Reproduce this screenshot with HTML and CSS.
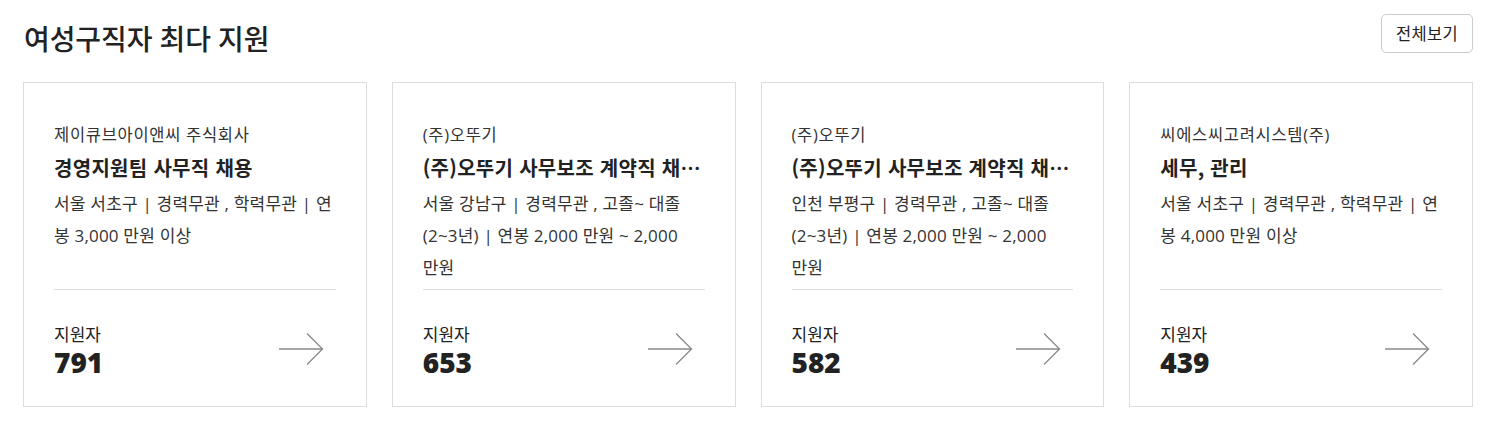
FILE: index.html
```html
<!DOCTYPE html>
<html lang="ko">
<head>
<meta charset="utf-8">
<link rel="stylesheet" href="styles.css">
</head>
<body>
<section class="wrap">
  <header class="head">
    <h2 class="head-title">여성구직자 최다 지원</h2>
    <a class="more-btn" href="#">전체보기</a>
  </header>
  <div class="cards">
    <article class="card">
      <div class="info">
        <p class="company">제이큐브아이앤씨 주식회사</p>
        <h3 class="job">경영지원팀 사무직 채용</h3>
        <p class="desc">서울 서초구 | 경력무관 , 학력무관 | 연봉 3,000 만원 이상</p>
      </div>
      <div class="foot">
        <div class="count"><span class="label">지원자</span><strong class="num">791</strong></div>
        <svg class="arrow" width="46" height="32" viewBox="0 0 46 32"><path d="M1 16H45M29 0.5L44.5 16L29 31.5" fill="none" stroke="#8a8a8a" stroke-width="1.3"/></svg>
      </div>
    </article>
    <article class="card">
      <div class="info">
        <p class="company">(주)오뚜기</p>
        <h3 class="job">(주)오뚜기 사무보조 계약직 채용 공고</h3>
        <p class="desc">서울 강남구 | 경력무관 , 고졸~ 대졸 (2~3년) | 연봉 2,000 만원 ~ 2,000 <span class="nw">만원</span></p>
      </div>
      <div class="foot">
        <div class="count"><span class="label">지원자</span><strong class="num">653</strong></div>
        <svg class="arrow" width="46" height="32" viewBox="0 0 46 32"><path d="M1 16H45M29 0.5L44.5 16L29 31.5" fill="none" stroke="#8a8a8a" stroke-width="1.3"/></svg>
      </div>
    </article>
    <article class="card">
      <div class="info">
        <p class="company">(주)오뚜기</p>
        <h3 class="job">(주)오뚜기 사무보조 계약직 채용 공고</h3>
        <p class="desc">인천 부평구 | 경력무관 , 고졸~ 대졸 (2~3년) | 연봉 2,000 만원 ~ 2,000 <span class="nw">만원</span></p>
      </div>
      <div class="foot">
        <div class="count"><span class="label">지원자</span><strong class="num">582</strong></div>
        <svg class="arrow" width="46" height="32" viewBox="0 0 46 32"><path d="M1 16H45M29 0.5L44.5 16L29 31.5" fill="none" stroke="#8a8a8a" stroke-width="1.3"/></svg>
      </div>
    </article>
    <article class="card">
      <div class="info">
        <p class="company">씨에스씨고려시스템(주)</p>
        <h3 class="job">세무, 관리</h3>
        <p class="desc">서울 서초구 | 경력무관 , 학력무관 | 연봉 4,000 만원 이상</p>
      </div>
      <div class="foot">
        <div class="count"><span class="label">지원자</span><strong class="num">439</strong></div>
        <svg class="arrow" width="46" height="32" viewBox="0 0 46 32"><path d="M1 16H45M29 0.5L44.5 16L29 31.5" fill="none" stroke="#8a8a8a" stroke-width="1.3"/></svg>
      </div>
    </article>
  </div>
</section>
</body>
</html>
```
FILE: styles.css
```css
* { box-sizing: border-box; }
body {
  margin: 0;
  background: #fff;
  color: #333;
  font-family: "Open Sans", "Noto Sans CJK KR", sans-serif;
}
.wrap {
  width: 1450px;
  margin-left: 23px;
}
.head {
  display: flex;
  justify-content: space-between;
  align-items: flex-start;
  height: 82px;
}
.head-title {
  margin: 20px 0 0 1px;
  font-size: 28px;
  line-height: 38px;
  font-weight: 500;
  color: #222;
  letter-spacing: -0.1px;
}
.more-btn {
  margin-top: 14px;
  height: 39px;
  padding: 0 14px;
  border: 1px solid #ccc;
  border-radius: 5px;
  font-size: 16.5px;
  letter-spacing: 0.3px;
  line-height: 37px;
  color: #222;
  text-decoration: none;
}
.cards {
  display: flex;
  gap: 25px;
}
.card {
  flex: 1;
  border: 1px solid #ddd;
  padding: 0 30px;
  min-width: 0;
}
.info {
  height: 207px;
  padding-top: 40px;
  border-bottom: 1px solid #ddd;
}
.company {
  margin: 0;
  font-size: 16.5px;
  letter-spacing: 0.7px;
  line-height: 24px;
  color: #333;
}
.job {
  margin: 9px 0 0;
  font-family: "Noto Sans CJK KR", sans-serif;
  font-size: 20px;
  letter-spacing: 0.3px;
  line-height: 24px;
  font-weight: 700;
  color: #222;
  white-space: nowrap;
  overflow: hidden;
  text-overflow: ellipsis;
}
.desc {
  margin: 8px 0 0;
  font-size: 17px;
  letter-spacing: 0.2px;
  line-height: 32px;
  color: #333;
}
.nw { white-space: nowrap; }
.foot {
  display: flex;
  justify-content: space-between;
  align-items: center;
  padding: 34px 12px 28px 0;
}
.count {
  display: flex;
  flex-direction: column;
}
.label {
  font-size: 17px;
  line-height: 22px;
  color: #222;
}
.num {
  font-size: 28px;
  line-height: 32px;
  font-weight: 800;
  color: #222;
}
.arrow {
  display: block;
  margin-top: -4px;
}
```
